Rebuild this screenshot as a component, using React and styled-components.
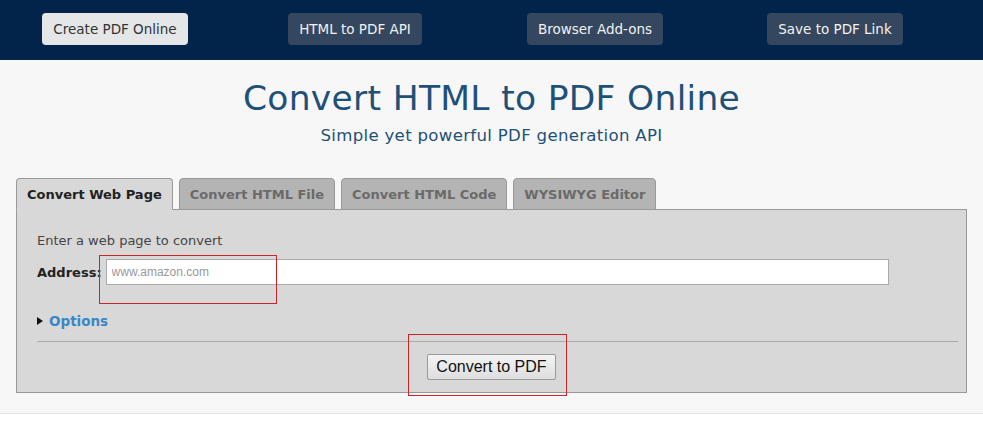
import styled, { createGlobalStyle } from 'styled-components';

const Global = createGlobalStyle`
  body { margin: 0; background: #fff; font-family: "DejaVu Sans", Verdana, sans-serif; }
`;

const Nav = styled.div`
  height: 60px;
  background: #03244a;
  display: grid;
  grid-template-columns: repeat(4, 240px);
  justify-items: center;
  align-items: center;
  margin-left: -5px;
`;

const NavButton = styled.div`
  height: 32px;
  padding: 0 11px;
  display: flex;
  align-items: center;
  border-radius: 4px;
  font-size: 13.5px;
  background: ${p => (p.$active ? '#e4e6e8' : '#34475e')};
  color: ${p => (p.$active ? '#333' : '#f2f2f2')};
  margin-top: -3px;
`;

const Main = styled.div`
  background: #f7f7f7;
  padding: 18px 16px 20px;
  border-bottom: 1px solid #e2e2e2;
`;

const Title = styled.h1`
  margin: 0;
  text-align: center;
  font-weight: normal;
  font-size: 34.5px;
  color: #1f5178;
  letter-spacing: 0.3px;
`;

const Subtitle = styled.div`
  text-align: center;
  font-size: 16.6px;
  color: #1f5178;
  margin-top: 8px;
  letter-spacing: 0.3px;
`;

const Tabs = styled.div`
  display: flex;
  gap: 6px;
  margin-top: 33px;
  position: relative;
  z-index: 1;
  margin-bottom: -1px;
`;

const Tab = styled.div`
  height: 30px;
  padding: 0 10px;
  display: flex;
  align-items: center;
  font-size: 13px;
  font-weight: bold;
  border: 1px solid #999;
  border-bottom-color: ${p => (p.$active ? '#d8d8d8' : '#999')};
  border-radius: 4px 4px 0 0;
  background: ${p => (p.$active ? '#d8d8d8' : '#b4b4b4')};
  color: ${p => (p.$active ? '#222' : '#6a6a6a')};
`;

const Panel = styled.div`
  background: #d8d8d8;
  border: 1px solid #999;
  padding: 23px 8px 12px 20px;
  position: relative;
`;

const Hint = styled.div`
  font-size: 13px;
  color: #444;
`;

const Row = styled.div`
  display: flex;
  align-items: center;
  margin-top: 11px;
  gap: 4px;
`;

const Label = styled.label`
  font-weight: bold;
  font-size: 13px;
  color: #222;
`;

const Input = styled.input`
  width: 783px;
  height: 26px;
  box-sizing: border-box;
  border: 1px solid #aaa;
  padding: 0 5px;
  font-family: "Liberation Sans", Arial, sans-serif;
  font-size: 12px;
  &::placeholder { color: #999; }
`;

const Options = styled.div`
  margin-top: 28px;
  display: flex;
  align-items: center;
  gap: 6px;
  font-size: 13.5px;
  font-weight: bold;
  color: #3a87c8;
  &::before {
    content: '';
    border-left: 6px solid #111;
    border-top: 4px solid transparent;
    border-bottom: 4px solid transparent;
  }
`;

const Divider = styled.hr`
  margin: 12px 0 0;
  border: 0;
  border-top: 1px solid #aaa;
`;

const ButtonRow = styled.div`
  display: flex;
  justify-content: center;
  margin-top: 12px;
  padding-right: 12px;
`;

const Button = styled.button`
  height: 26px;
  padding: 0 8px;
  font-family: "Liberation Sans", Arial, sans-serif;
  font-size: 16px;
  color: #111;
  background: linear-gradient(#f4f4f4, #dedede);
  border: 1px solid #999;
  border-radius: 2px;
`;

const Mark = styled.div`
  position: absolute;
  border: 1px solid #c8262a;
  pointer-events: none;
`;

export default function App() {
  return (
    <>
      <Global />
      <Nav>
        <NavButton $active>Create PDF Online</NavButton>
        <NavButton>HTML to PDF API</NavButton>
        <NavButton>Browser Add-ons</NavButton>
        <NavButton>Save to PDF Link</NavButton>
      </Nav>
      <Main>
        <Title>Convert HTML to PDF Online</Title>
        <Subtitle>Simple yet powerful PDF generation API</Subtitle>
        <Tabs>
          <Tab $active>Convert Web Page</Tab>
          <Tab>Convert HTML File</Tab>
          <Tab>Convert HTML Code</Tab>
          <Tab>WYSIWYG Editor</Tab>
        </Tabs>
        <Panel>
          <Hint>Enter a web page to convert</Hint>
          <Row>
            <Label>Address:</Label>
            <Input placeholder="www.amazon.com" />
          </Row>
          <Options>Options</Options>
          <Divider />
          <ButtonRow>
            <Button>Convert to PDF</Button>
          </ButtonRow>
          <Mark style={{ left: 82, top: 45, width: 176, height: 47 }} />
          <Mark style={{ left: 391, top: 124, width: 157, height: 60 }} />
        </Panel>
      </Main>
    </>
  );
}
